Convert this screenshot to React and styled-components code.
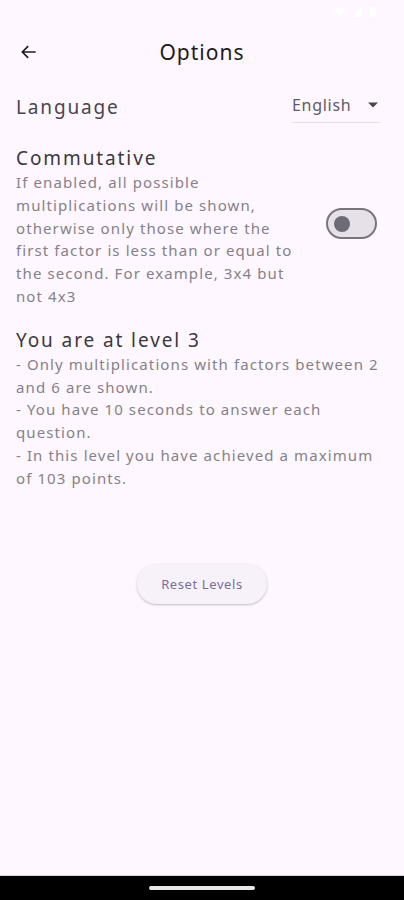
import React, { useState } from "react";
import styled, { createGlobalStyle } from "styled-components";

const GlobalStyle = createGlobalStyle`
  html, body {
    margin: 0;
    padding: 0;
    background: #fef7ff;
  }
  body {
    font-family: "Noto Sans", "Open Sans", sans-serif;
  }
`;

const Screen = styled.div`
  width: 404px;
  height: 900px;
  display: flex;
  flex-direction: column;
  background: #fef7ff;
  overflow: hidden;
`;

const StatusBar = styled.div`
  height: 24px;
  display: flex;
  justify-content: flex-end;
  align-items: center;
  gap: 4px;
  padding: 0 26px;
`;

const TopBar = styled.header`
  height: 56px;
  display: flex;
  align-items: center;
  padding: 0 18px;
`;

const BackButton = styled.button`
  width: 22px;
  height: 24px;
  padding: 0;
  border: 0;
  background: none;
  display: flex;
  align-items: center;
  justify-content: center;
  cursor: pointer;
`;

const Title = styled.h1`
  flex: 1;
  margin: 0 22px 0 0;
  text-align: center;
  font-size: 21px;
  font-weight: 400;
  color: #1d1b20;
  letter-spacing: 1px;
`;

const Content = styled.main`
  flex: 1;
  display: flex;
  flex-direction: column;
  padding: 10px 16px 0 16px;
`;

const Row = styled.div`
  display: flex;
  align-items: ${(p) => p.$align || "center"};
  justify-content: space-between;
`;

const Label = styled.div`
  font-size: 19px;
  color: #49454f;
  letter-spacing: 1.85px;
`;

const Dropdown = styled.div`
  width: 86px;
  display: flex;
  align-items: center;
  justify-content: space-between;
  padding: 4px 2px 6px 0;
  border-bottom: 1px solid #e7e0ec;
  font-size: 16px;
  color: #5f5b66;
  letter-spacing: 0.7px;
  margin-right: 8px;
`;

const Section = styled.section`
  margin-top: ${(p) => p.$top || 0}px;
`;

const SectionTitle = styled.div`
  font-size: 19px;
  color: #3b3840;
  letter-spacing: 1.9px;
  line-height: 26px;
`;

const Body = styled.div`
  font-size: 15px;
  line-height: 22.8px;
  color: #85818a;
  letter-spacing: 1.1px;
  max-width: ${(p) => p.$max || "none"};
`;

const SwitchTrack = styled.button`
  width: 51px;
  height: 31px;
  box-sizing: border-box;
  border-radius: 16px;
  border: 2px solid #79747e;
  background: #e6e0e9;
  padding: 0 0 0 6px;
  display: flex;
  align-items: center;
  margin: 63px 11px 0 0;
  flex-shrink: 0;
  cursor: pointer;
`;

const SwitchThumb = styled.span`
  width: 16px;
  height: 16px;
  border-radius: 50%;
  background: #6f6b74;
`;

const ButtonWrap = styled.div`
  display: flex;
  justify-content: center;
  margin-top: 74px;
`;

const ResetButton = styled.button`
  height: 40px;
  padding: 0 24px;
  border: 0;
  border-radius: 20px;
  background: #f7f2fa;
  box-shadow: 0 1px 3px rgba(0, 0, 0, 0.18), 0 1px 1px rgba(0, 0, 0, 0.08);
  font-family: "Noto Sans", sans-serif;
  font-size: 13px;
  letter-spacing: 0.6px;
  color: #7a6e96;
  cursor: pointer;
`;

const NavBar = styled.div`
  height: 24px;
  background: #000;
  border-top: 1px solid #d9d4dc;
  display: flex;
  align-items: center;
  justify-content: center;
`;

const Handle = styled.div`
  width: 106px;
  height: 4px;
  border-radius: 2px;
  background: #e8e8e8;
`;

export default function App() {
  const [on, setOn] = useState(false);
  return (
    <Screen>
      <GlobalStyle />
      <StatusBar>
        <svg width="46" height="12" viewBox="0 0 46 12">
          <path d="M2 4 L8 10 L14 4 Q8 -1 2 4Z" fill="#ffffff" />
          <path d="M20 11 L30 11 L30 1Z" fill="#ffffff" />
          <rect x="38" y="1" width="6" height="10" rx="1" fill="#ffffff" />
        </svg>
      </StatusBar>
      <TopBar>
        <BackButton aria-label="Back">
          <svg width="20" height="20" viewBox="0 0 24 24">
            <path
              d="M20 12H5M11 5l-7 7 7 7"
              fill="none"
              stroke="#1d1b20"
              strokeWidth="2"
            />
          </svg>
        </BackButton>
        <Title>Options</Title>
      </TopBar>
      <Content>
        <Row>
          <Label>Language</Label>
          <Dropdown>
            <span>English</span>
            <svg width="10" height="6" viewBox="0 0 10 5">
              <path d="M0 0h10L5 5z" fill="#49454f" />
            </svg>
          </Dropdown>
        </Row>
        <Section $top={22}>
          <Row $align="flex-start">
            <div>
              <SectionTitle>Commutative</SectionTitle>
              <Body $max="290px">
                If enabled, all possible multiplications will be shown,
                otherwise only those where the first factor is less than or
                equal to the second. For example, 3x4 but not 4x3
              </Body>
            </div>
            <SwitchTrack onClick={() => setOn(!on)} aria-label="Commutative">
              <SwitchThumb />
            </SwitchTrack>
          </Row>
        </Section>
        <Section $top={19}>
          <SectionTitle>You are at level 3</SectionTitle>
          <Body>- Only multiplications with factors between 2 and 6 are shown.</Body>
          <Body>- You have 10 seconds to answer each question.</Body>
          <Body>
            - In this level you have achieved a maximum of 103 points.
          </Body>
        </Section>
        <ButtonWrap>
          <ResetButton>Reset Levels</ResetButton>
        </ButtonWrap>
      </Content>
      <NavBar>
        <Handle />
      </NavBar>
    </Screen>
  );
}
